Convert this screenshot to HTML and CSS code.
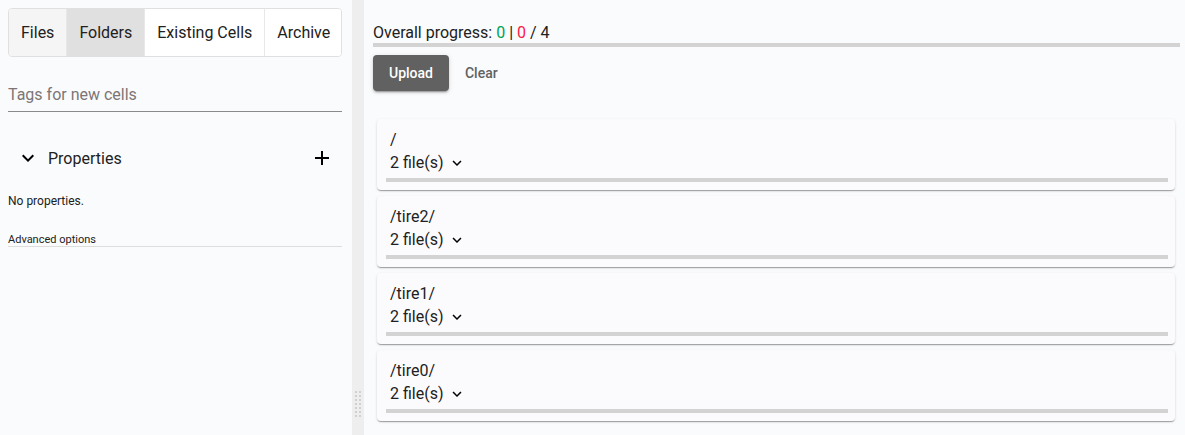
FILE: index.html
```html
<!DOCTYPE html>
<html lang="en">
<head>
    <meta charset="UTF-8">
    <meta name="viewport" content="width=device-width, initial-scale=1.0">
    <title>Upload</title>
    <link rel="stylesheet" href="styles.css">
</head>
<body>
    <div class="layout">
        <div class="side">
            <div class="tabs">
                <div class="tab tab-files">Files</div>
                <div class="tab tab-active">Folders</div>
                <div class="tab">Existing Cells</div>
                <div class="tab">Archive</div>
            </div>
            <input class="tags" type="text" placeholder="Tags for new cells">
            <div class="props-head">
                <svg class="chev" width="24" height="24" viewBox="0 0 24 24"><path d="M7.41 8.59 12 13.17l4.59-4.58L18 10l-6 6-6-6z" fill="#000"/></svg>
                <span class="props-title">Properties</span>
                <svg class="plus" width="24" height="24" viewBox="0 0 24 24"><path d="M19 13h-6v6h-2v-6H5v-2h6V5h2v6h6z" fill="#000"/></svg>
            </div>
            <div class="no-props">No properties.</div>
            <div class="advanced">Advanced options</div>
        </div>
        <div class="splitter">
            <div class="grip"></div>
        </div>
        <div class="main">
            <div class="overall">Overall progress: <span class="ok">0</span> | <span class="fail">0</span> / 4</div>
            <div class="bar"></div>
            <div class="actions">
                <button class="btn btn-upload">Upload</button>
                <button class="btn btn-clear">Clear</button>
            </div>
            <div class="folders" id="folders"></div>
        </div>
    </div>
    <script>
        const folders = ['/', '/tire2/', '/tire1/', '/tire0/'];
        const list = document.getElementById('folders');
        folders.forEach(name => {
            const card = document.createElement('div');
            card.className = 'card';
            card.innerHTML =
                '<div class="card-name">' + name + '</div>' +
                '<div class="card-count">2 file(s)' +
                '<svg width="18" height="18" viewBox="0 0 24 24"><path d="M7.41 8.59 12 13.17l4.59-4.58L18 10l-6 6-6-6z" fill="#000"/></svg>' +
                '</div>' +
                '<div class="card-bar"></div>';
            list.appendChild(card);
        });
    </script>
</body>
</html>
```
FILE: styles.css
```css
body {
    margin: 0;
    font-family: Roboto, "Liberation Sans", sans-serif;
    color: #212121;
    background-color: #fafbfd;
}

.layout {
    display: flex;
    height: 435px;
}

.side {
    width: 334px;
    padding: 8px 10px 0 8px;
}

.tabs {
    display: flex;
    height: 47px;
    border: 1px solid #e0e0e0;
    border-radius: 4px;
    overflow: hidden;
}

.tab {
    display: flex;
    flex: none;
    align-items: center;
    padding: 0 12px;
    font-size: 16px;
    white-space: nowrap;
    color: #212121;
    background-color: #fff;
}

.tab + .tab {
    border-left: 1px solid #e8e8e8;
}

.tab:last-child {
    flex: 1;
}

.tab-files {
    background-color: #f5f5f5;
}

.tab-active {
    background-color: #e0e0e0;
}

.tags {
    display: block;
    box-sizing: border-box;
    width: 100%;
    margin-top: 24px;
    padding: 4px 0 7px;
    border: none;
    border-bottom: 1px solid #8a8a8a;
    background: transparent;
    font-family: inherit;
    font-size: 16px;
    outline: none;
}

.tags::placeholder {
    color: #7d7575;
}

.props-head {
    display: flex;
    align-items: center;
    margin-top: 34px;
    padding-left: 8px;
    height: 24px;
}

.chev {
    margin-right: 8px;
}

.props-title {
    flex: 1;
    font-size: 16px;
}

.plus {
    margin-right: 8px;
}

.no-props {
    margin-top: 24px;
    font-size: 12px;
}

.advanced {
    margin-top: 25px;
    font-size: 11px;
    border-bottom: 1px solid #ddd;
}

.splitter {
    width: 12px;
    background-color: #eeeeee;
    position: relative;
}

.grip {
    position: absolute;
    left: 3px;
    top: 391px;
    width: 6px;
    height: 28px;
    background-image: linear-gradient(90deg, #d0d0d0 2px, transparent 2px);
    background-size: 4px 4px;
    -webkit-mask-image: linear-gradient(#000 2px, transparent 2px);
    -webkit-mask-size: 4px 4px;
}

.main {
    flex: 1;
    padding: 23px 5px 0 9px;
}

.overall {
    font-size: 16px;
    line-height: 19px;
}

.ok {
    color: #00a152;
}

.fail {
    color: #ff1744;
}

.bar {
    height: 4px;
    margin-top: 1px;
    background-color: #d3d3d3;
}

.actions {
    display: flex;
    margin-top: 8px;
}

.btn {
    height: 36px;
    padding: 0 16px 1px;
    border: none;
    border-radius: 4px;
    font-family: inherit;
    font-size: 14px;
    font-weight: 500;
    background: transparent;
    cursor: pointer;
}

.btn-upload {
    background-color: #616161;
    color: #fff;
    box-shadow: 0 3px 1px -2px rgba(0,0,0,.2), 0 2px 2px 0 rgba(0,0,0,.14), 0 1px 5px 0 rgba(0,0,0,.12);
}

.btn-clear {
    color: #616161;
}

.folders {
    display: flex;
    flex-direction: column;
    gap: 6px;
    margin: 28px 5px 0 4px;
}

.card {
    height: 71px;
    box-sizing: border-box;
    padding: 10px 7px 0 9px;
    border-radius: 4px;
    background-color: #fbfbfd;
    box-shadow: 0 2px 1px -1px rgba(0,0,0,.2), 0 1px 1px 0 rgba(0,0,0,.14), 0 1px 3px 0 rgba(0,0,0,.12);
}

.card-name,
.card-count {
    padding-left: 4px;
    font-size: 16px;
    line-height: 22px;
    height: 22px;
}

.card-count {
    display: flex;
    align-items: center;
    margin-top: 1px;
}

.card-count svg {
    margin-left: 4px;
}

.card-bar {
    height: 4px;
    margin-top: 4px;
    background-color: #d3d3d3;
}
```
